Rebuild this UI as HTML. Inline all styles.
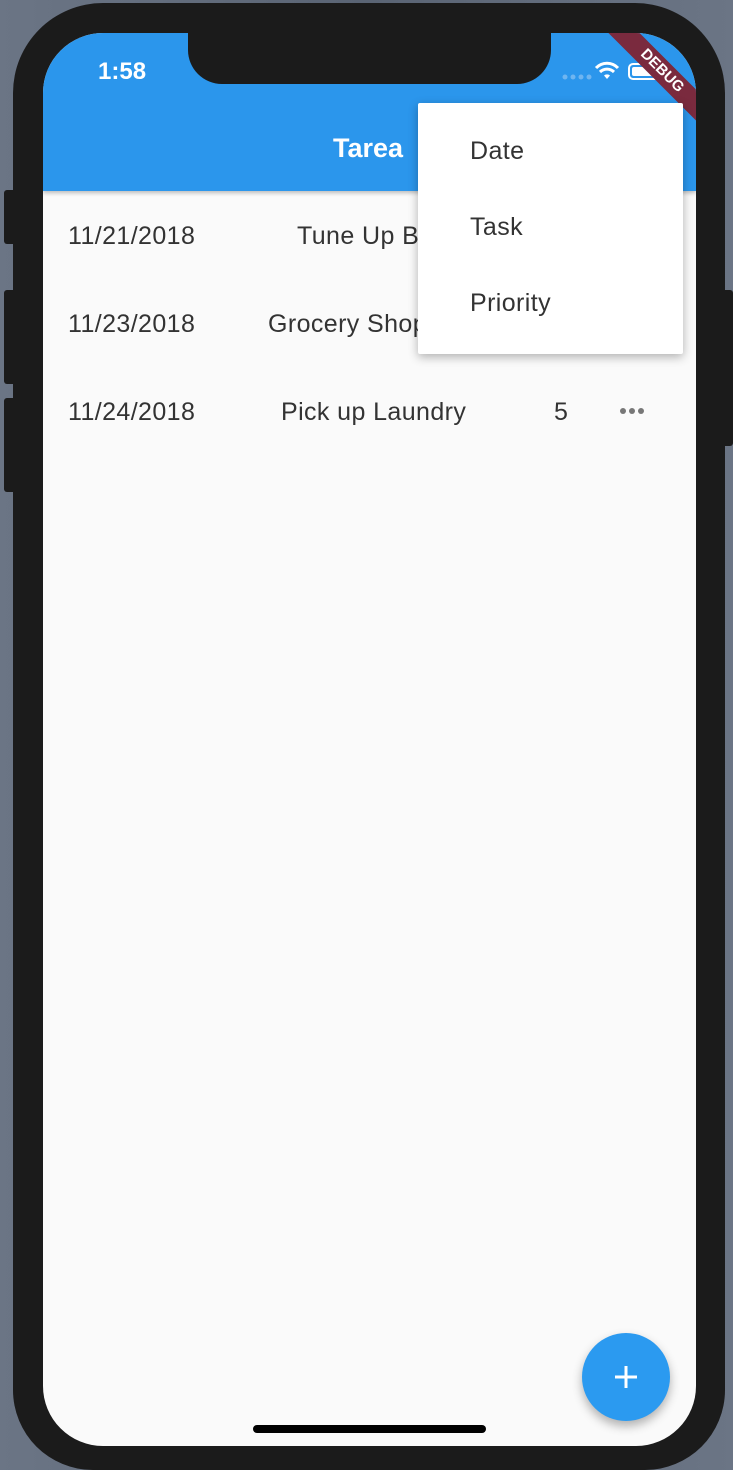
<!DOCTYPE html>
<html><head><style>
*{margin:0;padding:0;box-sizing:border-box}
html,body{width:733px;height:1470px;overflow:hidden}
body{background:linear-gradient(90deg,#6b7585,#5a6474 50%,#6b7585);font-family:"Liberation Sans",sans-serif;position:relative}
.phone{position:absolute;left:13px;top:3px;width:712px;height:1467px;background:#1b1b1b;border-radius:90px 90px 80px 80px}
.btn{position:absolute;background:#1b1b1b;border-radius:3px}
.screen{position:absolute;left:43px;top:33px;width:653px;height:1413px;background:#fafafa;border-radius:60px;overflow:hidden}
.bar{position:absolute;left:0;top:0;width:653px;height:158px;background:#2b96ec;box-shadow:0 2px 4px rgba(0,0,0,.25)}
.notch{position:absolute;left:145px;top:0;width:363px;height:51px;background:#1b1b1b;border-radius:0 0 34px 34px}
.t{position:absolute;color:#333;font-size:25px;letter-spacing:.4px;top:0}
.menu{position:absolute;left:418px;top:103px;width:265px;height:251px;background:#fff;box-shadow:0 3px 10px rgba(0,0,0,.3);border-radius:2px}
.menu div{position:absolute;left:52px;font-size:25px;letter-spacing:.4px;color:#333}
</style></head><body>
<div class="btn" style="left:4px;top:190px;width:12px;height:54px"></div>
<div class="btn" style="left:4px;top:290px;width:12px;height:94px"></div>
<div class="btn" style="left:4px;top:398px;width:12px;height:94px"></div>
<div class="btn" style="left:721px;top:290px;width:12px;height:156px"></div>
<div class="phone"></div>
<div class="screen">
 <div class="bar"></div>
 <div class="notch"></div>
 <div style="position:absolute;left:55px;top:25px;color:#fff;font-size:24px;font-weight:bold">1:58</div>
 <svg style="position:absolute;left:518px;top:40px" width="34" height="8"><g fill="#6fb5f0"><circle cx="4" cy="4" r="2.5"/><circle cx="12" cy="4" r="2.5"/><circle cx="20" cy="4" r="2.5"/><circle cx="28" cy="4" r="2.5"/></g></svg>
 <svg style="position:absolute;left:551px;top:28px" width="26" height="20" viewBox="0 0 26 20"><path d="M13 18l-3-3.5a4.5 4.5 0 016 0z" fill="#fff"/><path d="M6 11a10 10 0 0114 0M2 7a15 15 0 0122 0" stroke="#fff" stroke-width="3" fill="none"/></svg>
 <div style="position:absolute;left:585px;top:30px;width:34px;height:17px;border:2px solid #fff;border-radius:5px;padding:2px"><div style="width:100%;height:100%;background:#fff;border-radius:2px"></div></div>
 <div style="position:absolute;left:549px;top:27px;width:140px;height:22px;background:#7a2a3e;transform:rotate(45deg);color:#fff;font-size:15px;font-weight:bold;text-align:center;line-height:22px;transform-origin:center">DEBUG</div>
 <div style="position:absolute;left:290px;top:100px;color:#fff;font-size:27px;font-weight:bold">Tarea</div>
 <div class="t" style="left:25px;top:189px">11/21/2018</div>
 <div class="t" style="left:254px;top:189px">Tune Up Bike</div>
 <div class="t" style="left:25px;top:277px">11/23/2018</div>
 <div class="t" style="left:225px;top:277px">Grocery Shopping</div>
 <div class="t" style="left:25px;top:365px">11/24/2018</div>
 <div class="t" style="left:238px;top:365px">Pick up Laundry</div>
 <div class="t" style="left:511px;top:365px">5</div>
 <svg style="position:absolute;left:576px;top:374px" width="28" height="8"><g fill="#777"><circle cx="4" cy="4" r="3"/><circle cx="13" cy="4" r="3"/><circle cx="22" cy="4" r="3"/></g></svg>
 <div style="position:absolute;left:210px;top:1392px;width:233px;height:8px;background:#000;border-radius:4px"></div>
 <div style="position:absolute;left:539px;top:1300px;width:88px;height:88px;border-radius:50%;background:#2b9af0;box-shadow:0 5px 10px rgba(0,0,0,.3)"></div>
 <svg style="position:absolute;left:571px;top:1332px" width="24" height="24"><path d="M12 1v22M1 12h22" stroke="#fff" stroke-width="3"/></svg>
</div>
<div class="menu">
 <div style="top:34px">Date</div>
 <div style="top:110px">Task</div>
 <div style="top:186px">Priority</div>
</div>
</body></html>
